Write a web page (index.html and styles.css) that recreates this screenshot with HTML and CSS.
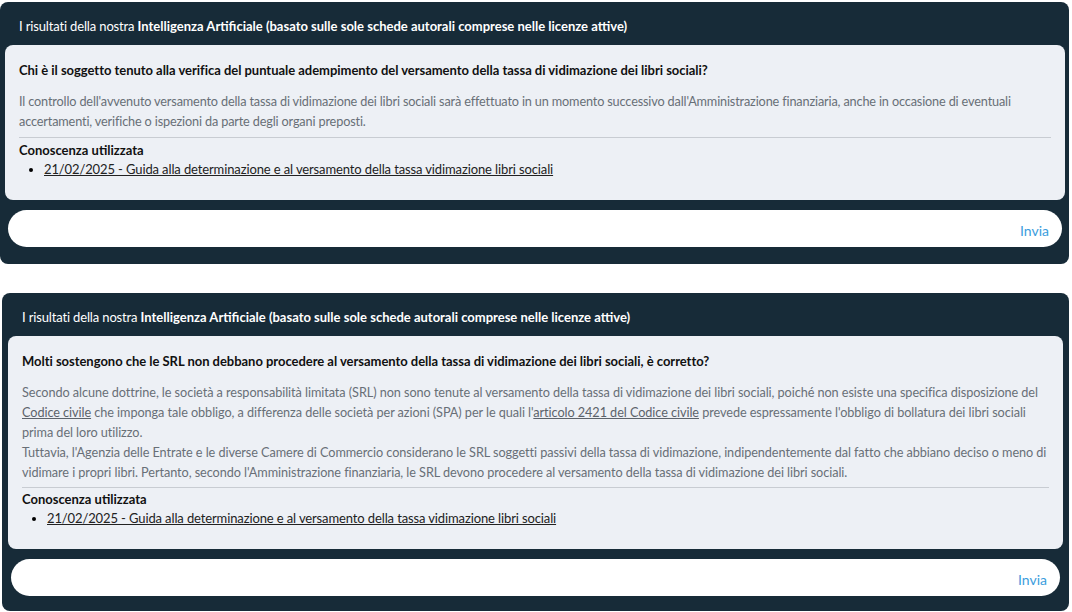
FILE: index.html
```html
<!DOCTYPE html>
<html lang="it">
  <head>
    <meta charset="UTF-8" />
    <meta name="viewport" content="width=device-width, initial-scale=1.0" />
    <title>Risultati AI</title>
    <link rel="stylesheet" href="styles.css">
  </head>

  <body>
    <div class="page">
      <div class="ai-panel first">
        <div class="ai-header">
          I risultati della nostra <b>Intelligenza Artificiale (basato sulle sole schede autorali comprese nelle licenze attive)</b>
        </div>
        <div class="ai-card">
          <div class="question">Chi è il soggetto tenuto alla verifica del puntuale adempimento del versamento della tassa di vidimazione dei libri sociali?</div>
          <div class="answer">
            Il controllo dell'avvenuto versamento della tassa di vidimazione dei libri sociali sarà effettuato in un momento successivo dall'Amministrazione finanziaria, anche in occasione di eventuali accertamenti, verifiche o ispezioni da parte degli organi preposti.
          </div>
          <div class="sources">
            <div class="sources-title">Conoscenza utilizzata</div>
            <ul>
              <li><a href="#">21/02/2025 - Guida alla determinazione e al versamento della tassa vidimazione libri sociali</a></li>
            </ul>
          </div>
        </div>
        <form class="ask-form">
          <input type="text" class="ask-input" />
          <button type="submit" class="send-button">Invia</button>
        </form>
      </div>

      <div class="ai-panel second">
        <div class="ai-header">
          I risultati della nostra <b>Intelligenza Artificiale (basato sulle sole schede autorali comprese nelle licenze attive)</b>
        </div>
        <div class="ai-card">
          <div class="question">Molti sostengono che le SRL non debbano procedere al versamento della tassa di vidimazione dei libri sociali, è corretto?</div>
          <div class="answer">
            Secondo alcune dottrine, le società a responsabilità limitata (SRL) non sono tenute al versamento della tassa di vidimazione dei libri sociali, poiché non esiste una specifica disposizione del <a href="#">Codice civile</a> che imponga tale obbligo, a differenza delle società per azioni (SPA) per le quali l'<a href="#">articolo 2421 del Codice civile</a> prevede espressamente l'obbligo di bollatura dei libri sociali prima del loro utilizzo.<br>
            Tuttavia, l'Agenzia delle Entrate e le diverse Camere di Commercio considerano le SRL soggetti passivi della tassa di vidimazione, indipendentemente dal fatto che abbiano deciso o meno di vidimare i propri libri. Pertanto, secondo l'Amministrazione finanziaria, le SRL devono procedere al versamento della tassa di vidimazione dei libri sociali.
          </div>
          <div class="sources">
            <div class="sources-title">Conoscenza utilizzata</div>
            <ul>
              <li><a href="#">21/02/2025 - Guida alla determinazione e al versamento della tassa vidimazione libri sociali</a></li>
            </ul>
          </div>
        </div>
        <form class="ask-form">
          <input type="text" class="ask-input" />
          <button type="submit" class="send-button">Invia</button>
        </form>
      </div>
    </div>
  </body>
</html>
```

FILE: styles.css
```css
body {
  margin: 0;
  background-color: white;
  font-family: Lato, "Liberation Sans", sans-serif;
  font-size: 13px;
}

.page {
  display: flex;
  flex-direction: column;
  gap: 29px;
  padding-top: 2px;
}

.ai-panel {
  background-color: #172b38;
  border-radius: 8px;
  display: flex;
  flex-direction: column;
}

.ai-panel.first {
  width: 1069px;
  padding: 0 4px 17px 5px;
  box-sizing: border-box;
}

.ai-panel.second {
  width: 1067px;
  margin-left: 2px;
  padding: 0 6px 15px 6px;
  box-sizing: border-box;
}

.ai-header {
  color: white;
  line-height: 19px;
  padding: 15px 9px 9px 14px;
  letter-spacing: -0.15px;
}

.ai-header b {
  letter-spacing: 0;
}

.ai-card {
  background-color: #edf0f5;
  border-radius: 8px;
  padding: 15px 14px 21px 14px;
}

.question {
  font-weight: bold;
  color: #111;
  line-height: 20px;
  letter-spacing: -0.03px;
}

.answer {
  color: #686f77;
  font-size: 12.7px;
  letter-spacing: -0.15px;
  line-height: 20px;
  margin-top: 11px;
  padding-bottom: 6px;
  border-bottom: 1px solid #c8ccd2;
}

.second .answer {
  letter-spacing: -0.07px;
  padding-bottom: 5px;
}

.answer a {
  color: #5c636b;
}

.sources {
  margin-top: 3px;
}

.second .sources {
  margin-top: 2px;
}

.sources-title {
  font-weight: bold;
  color: #111;
  line-height: 18px;
}

.sources ul {
  margin: 1px 0 0 0;
  padding-left: 25px;
  line-height: 19px;
}

.sources a {
  color: #222;
  letter-spacing: -0.12px;
}

.ask-form {
  margin: 10px 3px 0 3px;
  height: 37px;
  background-color: white;
  border-radius: 19px;
  display: flex;
  align-items: center;
}

.ask-input {
  flex: 1;
  border: none;
  outline: none;
  background: transparent;
  height: 100%;
  padding: 0 18px;
  font-size: 14px;
}

.send-button {
  border: none;
  background: none;
  color: #3b9ddd;
  font-family: Lato, "Liberation Sans", sans-serif;
  font-size: 14px;
  padding: 4px 13px 0 0;
  cursor: pointer;
}
```
